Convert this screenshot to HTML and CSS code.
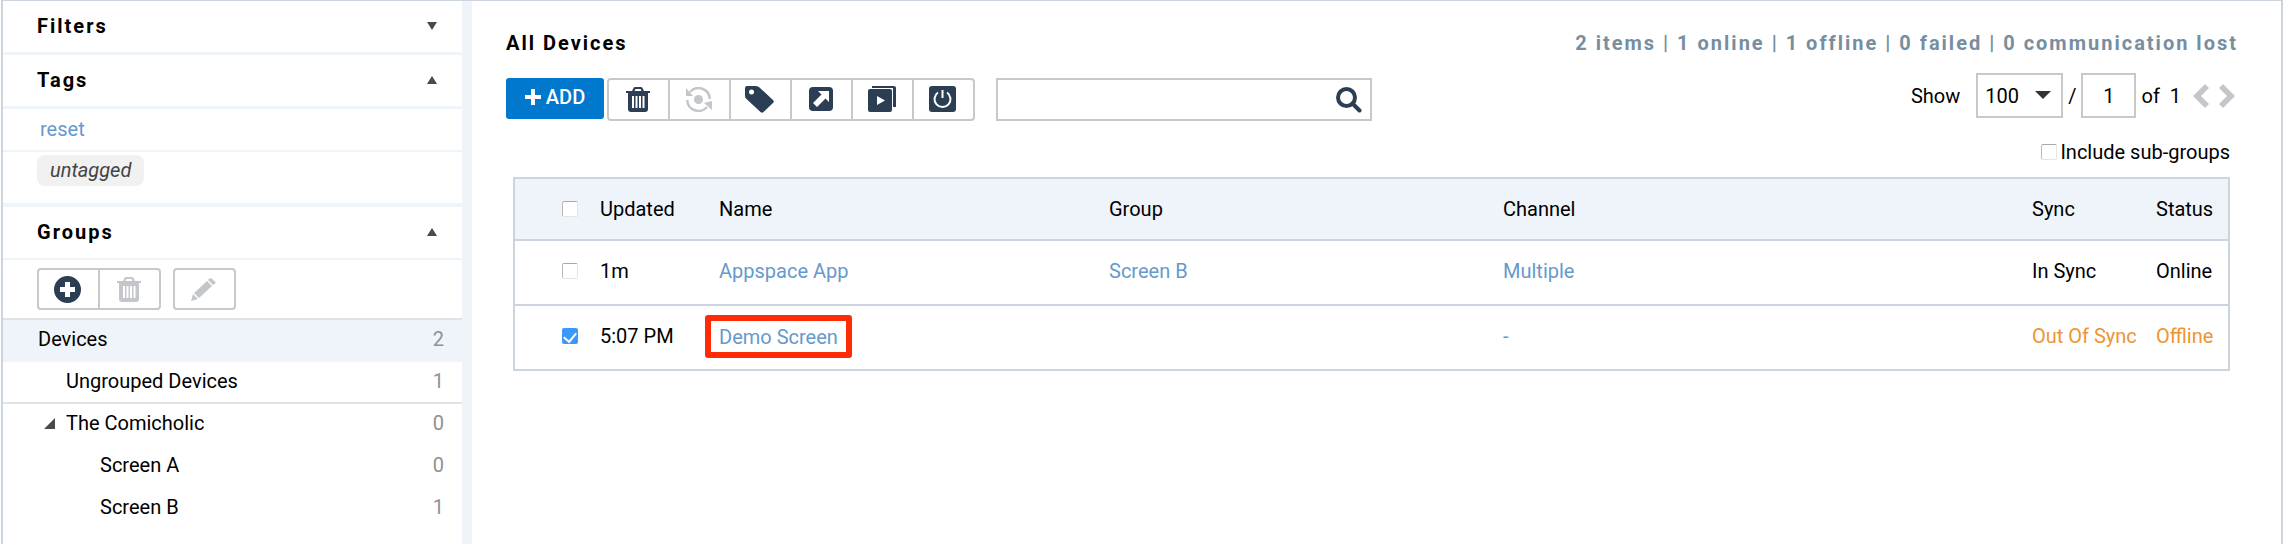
FILE: index.html
```html
<!DOCTYPE html>
<html lang="en">
<head>
    <meta charset="UTF-8">
    <meta name="viewport" content="width=device-width, initial-scale=1.0">
    <title>Devices</title>
    <link rel="stylesheet" href="styles.css">
</head>
<body>
    <div class="app">
        <aside class="sidebar">
            <button class="section-head" type="button">
                <span>Filters</span>
                <svg class="caret" viewBox="0 0 10 8"><path d="M0 0h10L5 8z"/></svg>
            </button>
            <section class="section tags">
                <button class="section-head" type="button">
                    <span>Tags</span>
                    <svg class="caret" viewBox="0 0 10 8"><path d="M0 8h10L5 0z"/></svg>
                </button>
                <div class="tag-reset"><a href="#">reset</a></div>
                <div class="tag-list"><span class="tag">untagged</span></div>
            </section>
            <section class="section groups">
                <button class="section-head" type="button">
                    <span>Groups</span>
                    <svg class="caret" viewBox="0 0 10 8"><path d="M0 8h10L5 0z"/></svg>
                </button>
                <div class="group-tools">
                    <div class="btn-group">
                        <button type="button" aria-label="Add group">
                            <svg width="27" height="27" viewBox="0 0 27 27"><path fill-rule="evenodd" d="M13.500 0a13.500 13.500 0 1 1 0 27a13.500 13.500 0 0 1 0-27zM11 6v5H6v5h5v5h5v-5h5v-5h-5V6z"/></svg>
                        </button>
                        <button type="button" aria-label="Delete group" disabled>
                            <svg width="24" height="25" viewBox="0 0 24 25"><path fill-rule="evenodd" d="M6 4l1.500-3Q8 0 9 0h6q1 0 1.500 1L18 4h6v2h-2v16q0 3-3 3H5q-3 0-3-3V6H0V4zM8.500 4h7l-1-2h-5zM6 9v12h2V9zM9.500 9v12h2V9zM13 9v12h2V9zM16.500 9v12h2V9z"/></svg>
                        </button>
                    </div>
                    <div class="btn-group">
                        <button type="button" aria-label="Edit group" disabled>
                            <svg width="25" height="23" viewBox="0 0 25 23"><path d="M0 23l2-7 5 5zM3 15L16 3l5 5L8 20zM17 2l1.500-1.500q1-1 2 0L24 3.500q1 1 0 2L22 7z"/></svg>
                        </button>
                    </div>
                </div>
                <ul class="tree">
                    <li class="level-1 selected"><a href="#">Devices</a><span class="count">2</span></li>
                    <li class="level-2 divided"><a href="#">Ungrouped Devices</a><span class="count">1</span></li>
                    <li class="level-2 parent">
                        <svg class="toggle" viewBox="0 0 11 11"><path d="M11 0v11H0z"/></svg>
                        <a href="#">The Comicholic</a><span class="count">0</span>
                    </li>
                    <li class="level-3"><a href="#">Screen A</a><span class="count">0</span></li>
                    <li class="level-3"><a href="#">Screen B</a><span class="count">1</span></li>
                </ul>
            </section>
        </aside>

        <main class="content">
            <header class="title-row">
                <h1>All Devices</h1>
                <p class="summary">2 items | 1 online | 1 offline | 0 failed | 0 communication lost</p>
            </header>

            <div class="toolbar">
                <button class="add" type="button">
                    <svg width="16" height="16" viewBox="0 0 16 16"><path d="M6 0h4v6h6v4h-6v6H6v-6H0V6h6z"/></svg>
                    ADD
                </button>
                <div class="btn-group">
                    <button type="button" aria-label="Delete">
                        <svg width="24" height="25" viewBox="0 0 24 25"><path fill-rule="evenodd" d="M6 4l1.500-3Q8 0 9 0h6q1 0 1.500 1L18 4h6v2h-2v16q0 3-3 3H5q-3 0-3-3V6H0V4zM8.500 4h7l-1-2h-5zM6 9v12h2V9zM9.500 9v12h2V9zM13 9v12h2V9zM16.500 9v12h2V9z"/></svg>
                    </button>
                    <button type="button" aria-label="Sync" disabled>
                        <svg width="27" height="25" viewBox="0 0 27 25"><g fill="none" stroke="currentColor" stroke-width="2.500"><path d="M5 5A11.300 11.300 0 0 1 24.800 12"/><path d="M22 20A11.300 11.300 0 0 1 2.200 13"/></g><circle cx="13.500" cy="12.500" r="4.500"/><path d="M1 1v8h7zM27 14v9l-8-7z"/></svg>
                    </button>
                    <button type="button" aria-label="Tag">
                        <svg width="29" height="27" viewBox="0 0 29 27"><path fill-rule="evenodd" d="M2 0h9q2 0 3.500 1.500L28 14q1.500 1.500 0 3l-9.500 9q-1.500 1.500-3 0L2 13.500Q0 12 0 10V2Q0 0 2 0zM6.500 3.500a2.500 2.500 0 1 0 0 5a2.500 2.500 0 0 0 0-5z"/></svg>
                    </button>
                    <button type="button" aria-label="Move">
                        <svg width="24" height="24" viewBox="0 0 24 24"><rect width="24" height="24" rx="4"/><path class="cut" d="M9 4h11v11l-3.500-3.500L8 20l-4-4 8.500-8.500z"/></svg>
                    </button>
                    <button type="button" aria-label="Publish">
                        <svg width="28" height="26" viewBox="0 0 28 26"><rect y="3" width="24" height="23" rx="2"/><path d="M4 0h22q2 0 2 2v19h-3V2H4z"/><path class="cut" d="M9 10l8 4.500L9 19z"/></svg>
                    </button>
                    <button type="button" aria-label="Restart">
                        <svg width="27" height="26" viewBox="0 0 27 26"><rect width="27" height="26" rx="3"/><path class="line" d="M9 6.500a8 8 0 1 0 9 0M13.500 4v8"/></svg>
                    </button>
                </div>
                <form class="search">
                    <input type="search" aria-label="Search devices">
                    <button type="submit" aria-label="Search">
                        <svg width="26" height="26" viewBox="0 0 26 26"><g fill="none" stroke="currentColor" stroke-width="4"><circle cx="10.500" cy="10.500" r="8.500"/><path stroke-linecap="round" d="M17 17l6.500 6.500"/></g></svg>
                    </button>
                </form>
                <div class="pager">
                    <label for="page-size">Show</label>
                    <div class="select">
                        <select id="page-size"><option>100</option></select>
                        <svg viewBox="0 0 16 8"><path d="M0 0h16L8 8z"/></svg>
                    </div>
                    <span>/</span>
                    <input type="text" value="1" aria-label="Page">
                    <span class="total">of&nbsp; 1</span>
                    <button type="button" aria-label="Previous page" disabled>
                        <svg width="17" height="24" viewBox="0 0 17 24"><path d="M12 0l4 4-8 8 8 8-4 4L0 12z"/></svg>
                    </button>
                    <button type="button" aria-label="Next page" disabled>
                        <svg width="17" height="24" viewBox="0 0 17 24"><path d="M5 0L1 4l8 8-8 8 4 4 12-12z"/></svg>
                    </button>
                </div>
            </div>

            <div class="options">
                <label><input type="checkbox">Include sub-groups</label>
            </div>

            <table class="devices">
                <colgroup>
                    <col class="col-check"><col class="col-updated"><col class="col-name"><col class="col-group">
                    <col class="col-channel"><col class="col-sync"><col class="col-status">
                </colgroup>
                <thead>
                    <tr>
                        <th><input type="checkbox" aria-label="Select all"></th>
                        <th>Updated</th>
                        <th>Name</th>
                        <th>Group</th>
                        <th>Channel</th>
                        <th>Sync</th>
                        <th>Status</th>
                    </tr>
                </thead>
                <tbody>
                    <tr>
                        <td><input type="checkbox" aria-label="Select Appspace App"></td>
                        <td>1m</td>
                        <td><a href="#">Appspace App</a></td>
                        <td><a href="#">Screen B</a></td>
                        <td><a href="#">Multiple</a></td>
                        <td>In Sync</td>
                        <td>Online</td>
                    </tr>
                    <tr>
                        <td><input type="checkbox" aria-label="Select Demo Screen" checked></td>
                        <td>5:07 PM</td>
                        <td><a class="highlight" href="#">Demo Screen</a></td>
                        <td></td>
                        <td><a href="#">-</a></td>
                        <td class="warn">Out Of Sync</td>
                        <td class="warn">Offline</td>
                    </tr>
                </tbody>
            </table>
        </main>
    </div>
</body>
</html>
```
FILE: styles.css
```css
* {
    box-sizing: border-box;
}
body {
    margin: 0;
    font-family: Roboto, "Liberation Sans", sans-serif;
    font-size: 20px;
    line-height: 24px;
    color: #000;
    background: #fff;
}
button, input, select {
    font: inherit;
    color: inherit;
}
button {
    padding: 0;
    border: none;
    background: none;
    cursor: pointer;
}
a {
    color: #6699cc;
    text-decoration: none;
}
svg {
    display: block;
    fill: currentColor;
}
.app {
    display: flex;
    min-height: 100vh;
    margin: 0 1px;
    border: 2px solid #ccd5dd;
    border-top-width: 1px;
    border-bottom: none;
}

/* sidebar */
.sidebar {
    flex: 0 0 469px;
    border-right: 10px solid #eef4f9;
}
.section {
    border-top: 3px solid #eef4f9;
}
.section.groups {
    border-top-width: 4px;
}
.section-head {
    display: flex;
    justify-content: space-between;
    align-items: center;
    width: 100%;
    height: 51px;
    padding: 0 25px 2px 34px;
    font-weight: 700;
    letter-spacing: 2px;
}
.caret {
    width: 10px;
    height: 8px;
    fill: #4a4a4a;
}
.tags .section-head {
    height: 54px;
    border-bottom: 3px solid #eef4f9;
}
.groups .section-head {
    height: 53px;
    border-bottom: 2px solid #eef4f9;
}
.tag-reset {
    height: 43px;
    padding: 8px 37px;
    border-bottom: 2px solid #eef4f9;
}
.tag-list {
    height: 51px;
    padding: 3px 34px;
}
.tag {
    display: inline-block;
    height: 31px;
    padding: 3px 13px;
    border-radius: 8px;
    background: #f1f1f1;
    color: #444;
    font-style: italic;
}
.btn-group {
    display: flex;
    border: 2px solid #c8c8c8;
    border-radius: 4px;
}
.btn-group button {
    display: flex;
    justify-content: center;
    align-items: center;
    width: 59px;
    height: 39px;
    padding: 0 2px 1px 0;
    color: #2c3e53;
}
.btn-group button + button {
    width: 61px;
    border-left: 2px solid #c8c8c8;
}
.btn-group button:disabled {
    color: #c3c7cc;
}
.group-tools {
    display: flex;
    gap: 12px;
    height: 58px;
    padding: 8px 34px;
}
.tree {
    margin: 0;
    padding: 0;
    list-style: none;
}
.tree li {
    display: flex;
    align-items: center;
    height: 42px;
    padding: 0 18px 4px 97px;
}
.tree a {
    flex: 1;
    color: #000;
}
.tree .level-1 {
    height: 44px;
    padding-left: 35px;
    border-top: 2px solid #dfe3e6;
}
.tree .level-2 {
    padding-left: 63px;
}
.tree .parent {
    padding-left: 41px;
}
.tree .divided {
    padding-bottom: 2px;
    border-bottom: 2px solid #e2e4e6;
}
.tree .selected {
    background: #eef4f9;
}
.toggle {
    width: 11px;
    height: 11px;
    margin-right: 11px;
    fill: #4a4a4a;
}
.count {
    color: #8e9193;
}

/* main area */
.content {
    flex: 1;
    padding: 30px 43px 0 34px;
}
.title-row {
    display: flex;
    justify-content: space-between;
}
.title-row h1, .summary {
    margin: 0;
    font-size: 20px;
    font-weight: 700;
    letter-spacing: 2px;
}
.summary {
    color: #778ea1;
}
.toolbar {
    display: flex;
    gap: 3px;
    margin-top: 23px;
}
.add {
    display: flex;
    justify-content: center;
    align-items: center;
    gap: 5px;
    width: 98px;
    height: 41px;
    padding-bottom: 4px;
    border-radius: 3px;
    background: #0078ce;
    color: #fff;
    font-weight: 500;
}
.cut {
    fill: #fff;
}
.line {
    fill: none;
    stroke: #fff;
    stroke-width: 2;
}
.search {
    display: flex;
    align-items: center;
    width: 376px;
    height: 43px;
    margin-left: 18px;
    padding-right: 8px;
    border: 2px solid #c8c8c8;
}
.search input {
    flex: 1;
    min-width: 0;
    border: none;
    outline: none;
    background: none;
}
.search button {
    color: #2c3e53;
}
.pager {
    display: flex;
    align-items: center;
    gap: 5px;
    height: 45px;
    margin: -5px 0 0 auto;
}
.select {
    position: relative;
    margin-left: 11px;
}
.select select {
    width: 87px;
    height: 45px;
    padding: 0 7px;
    border: 2px solid #c8c8c8;
    background: #fff;
    appearance: none;
}
.select svg {
    position: absolute;
    top: 18px;
    right: 12px;
    width: 16px;
    height: 8px;
    fill: #333;
    pointer-events: none;
}
.pager input {
    width: 55px;
    height: 45px;
    border: 2px solid #c8c8c8;
    text-align: center;
}
.total {
    margin-right: 7px;
}
.pager button {
    margin-right: 3px;
    color: #c3c7cc;
}
.options {
    display: flex;
    justify-content: flex-end;
    padding: 19px 8px 13px;
}
.options label {
    display: flex;
    align-items: center;
    gap: 3px;
}
input[type="checkbox"] {
    display: block;
    width: 16px;
    height: 16px;
    margin: 0;
    border: 1px solid #e4e4e4;
    border-top-color: #a8a8a8;
    border-left-color: #b8b8b8;
    border-radius: 2px;
    background: #fff;
    appearance: none;
}
input[type="checkbox"]:checked {
    border: none;
    background: #3b99fc;
}
input[type="checkbox"]:checked::after {
    content: "";
    display: block;
    width: 6px;
    height: 10px;
    margin: 0 auto;
    border: solid #fff;
    border-width: 0 2px 2px 0;
    transform: translateY(2px) rotate(40deg);
}
.devices {
    width: calc(100% - 15px);
    margin-left: 7px;
    border: 2px solid #ccd5dd;
    border-collapse: collapse;
    table-layout: fixed;
}
.devices th, .devices td {
    height: 65px;
    padding: 0 0 3px;
    border-bottom: 2px solid #ccd5dd;
    font-weight: 400;
    text-align: left;
    white-space: nowrap;
}
.devices th {
    height: 62px;
    padding: 0;
    background: #eef4f9;
}
.devices th:first-child, .devices td:first-child {
    padding-left: 47px;
}
.col-check {
    width: 86px;
}
.col-updated {
    width: 119px;
}
.col-name {
    width: 390px;
}
.col-group {
    width: 394px;
}
.col-sync {
    width: 124px;
}
.col-status {
    width: 73px;
}
.warn {
    color: #ee9433;
}
.highlight {
    display: inline-block;
    margin-left: -14px;
    padding: 4px 8px 3px;
    border: 6px solid #ff2b06;
    border-radius: 3px;
}
```
